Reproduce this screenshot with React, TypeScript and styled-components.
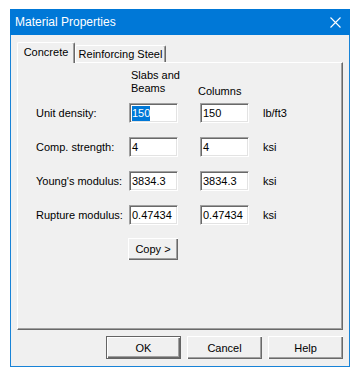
import React from 'react';
import styled, {createGlobalStyle} from 'styled-components';

const GlobalStyle = createGlobalStyle`
    html, body {
        margin: 0;
        padding: 0;
        background: #ffffff;
    }
    body {
        font-family: "Liberation Sans", Arial, sans-serif;
        font-size: 11px;
        color: #000;
    }
`;

const Page = styled.div`
    padding: 9px 0 0 10px;
`;

const Window = styled.div`
    box-sizing: border-box;
    width: 340px;
    height: 358px;
    border: 1px solid #1883d7;
    border-top: none;
    background: #f0f0f0;
    display: flex;
    flex-direction: column;
`;

const TitleBar = styled.div`
    height: 26px;
    margin: 0 -1px;
    background: #0078d7;
    display: flex;
    align-items: center;
    justify-content: space-between;
    padding-left: 5px;
    color: #fff;
    font-size: 12px;
`;

const CloseButton = styled.div`
    width: 30px;
    height: 26px;
    display: flex;
    align-items: center;
    justify-content: center;
`;

const Body = styled.div`
    flex: 1;
    display: flex;
    flex-direction: column;
    padding: 7px 6px 7px 6px;
`;

const TabRow = styled.div`
    display: flex;
    align-items: flex-end;
    height: 20px;
`;

const Tab = styled.div<{ $active?: boolean }>`
    box-sizing: border-box;
    width: ${p => (p.$active ? '58px' : '91px')};
    height: ${p => (p.$active ? '21px' : '17px')};
    margin-bottom: ${p => (p.$active ? '-1px' : '0')};
    position: relative;
    z-index: ${p => (p.$active ? 2 : 0)};
    background: #f0f0f0;
    border-top: 1px solid #fff;
    border-left: 1px solid #fff;
    border-right: 1px solid #696969;
    box-shadow: inset -1px 0 #a0a0a0;
    border-radius: 2px 2px 0 0;
    display: flex;
    align-items: center;
    justify-content: center;
    padding-bottom: ${p => (p.$active ? '2px' : '0')};
`;

const Panel = styled.div`
    box-sizing: border-box;
    height: 268px;
    border-top: 1px solid #fff;
    border-left: 1px solid #fff;
    border-right: 1px solid #696969;
    border-bottom: 1px solid #696969;
    box-shadow: inset -1px -1px #a0a0a0;
    padding: 6px 0 0 18px;
`;

const Grid = styled.div`
    display: grid;
    grid-template-columns: 93px 71px 63px auto;
    grid-auto-rows: 20px;
    row-gap: 14px;
    align-items: center;
`;

const HeadRow = styled.div`
    display: grid;
    grid-template-columns: 93px 71px 63px auto;
    height: 34px;
`;

const ColHead = styled.div<{ $shift?: number }>`
    grid-column: ${p => p.$shift ? 3 : 2};
    line-height: 13px;
    padding-left: ${p => (p.$shift ? '0' : '2px')};
    margin-left: ${p => (p.$shift ? '-2px' : '0')};
    align-self: ${p => (p.$shift ? 'end' : 'start')};
    margin-bottom: ${p => (p.$shift ? '5px' : '0')};
`;

const Label = styled.div`
    white-space: nowrap;
`;

const Field = styled.div`
    box-sizing: border-box;
    width: 49px;
    height: 20px;
    background: #fff;
    border-top: 1px solid #a0a0a0;
    border-left: 1px solid #a0a0a0;
    border-right: 1px solid #fff;
    border-bottom: 1px solid #fff;
    box-shadow: inset 1px 1px #696969, inset -1px -1px #e3e3e3;
    padding: 2px 0 0 2px;
    line-height: 15px;
    white-space: nowrap;
    overflow: hidden;
`;

const Selected = styled.span`
    background: #0078d7;
    color: #fff;
    display: inline-block;
    line-height: 15px;
`;

const Unit = styled.div`
    white-space: nowrap;
`;

const Button = styled.button<{ $default?: boolean; $w?: number }>`
    box-sizing: border-box;
    width: ${p => p.$w ?? 75}px;
    height: ${p => (p.$default ? 23 : p.$w ? 22 : 23)}px;
    padding: 0;
    font-family: "Liberation Sans", Arial, sans-serif;
    font-size: 11px;
    color: #000;
    background: #f0f0f0;
    border: ${p => (p.$default ? '1px solid #646464' : 'none')};
    box-shadow: inset 1px 1px #fff, inset -1px -1px #696969, inset -2px -2px #a0a0a0;
    cursor: pointer;
`;

const CopyCell = styled.div`
    grid-column: 2;
    margin-left: -1px;
    height: 22px;
`;

const Footer = styled.div`
    display: flex;
    justify-content: flex-end;
    gap: 6px;
    margin-top: 6px;
`;

const rows = [
    {label: 'Unit density:', slab: '150', col: '150', unit: 'lb/ft3', selected: true},
    {label: 'Comp. strength:', slab: '4', col: '4', unit: 'ksi'},
    {label: "Young's modulus:", slab: '3834.3', col: '3834.3', unit: 'ksi'},
    {label: 'Rupture modulus:', slab: '0.47434', col: '0.47434', unit: 'ksi'},
];

const App = () => {
    return (
        <>
            <GlobalStyle/>
            <Page>
                <Window>
                    <TitleBar>
                        <span>Material Properties</span>
                        <CloseButton>
                            <svg width="11" height="11" viewBox="0 0 11 11">
                                <path d="M0.5 0.5 L10.5 10.5 M10.5 0.5 L0.5 10.5" stroke="#fff" strokeWidth="1.1"/>
                            </svg>
                        </CloseButton>
                    </TitleBar>
                    <Body>
                        <TabRow>
                            <Tab $active>Concrete</Tab>
                            <Tab>Reinforcing Steel</Tab>
                        </TabRow>
                        <Panel>
                            <HeadRow>
                                <ColHead>Slabs and<br/>Beams</ColHead>
                                <ColHead $shift={1}>Columns</ColHead>
                            </HeadRow>
                            <Grid>
                                {rows.map(r => (
                                    <React.Fragment key={r.label}>
                                        <Label>{r.label}</Label>
                                        <Field>{r.selected ? <Selected>{r.slab}</Selected> : r.slab}</Field>
                                        <Field>{r.col}</Field>
                                        <Unit>{r.unit}</Unit>
                                    </React.Fragment>
                                ))}
                                <CopyCell>
                                    <Button $w={50}>Copy &gt;</Button>
                                </CopyCell>
                            </Grid>
                        </Panel>
                        <Footer>
                            <Button $default>OK</Button>
                            <Button>Cancel</Button>
                            <Button>Help</Button>
                        </Footer>
                    </Body>
                </Window>
            </Page>
        </>
    );
};

export default App;
